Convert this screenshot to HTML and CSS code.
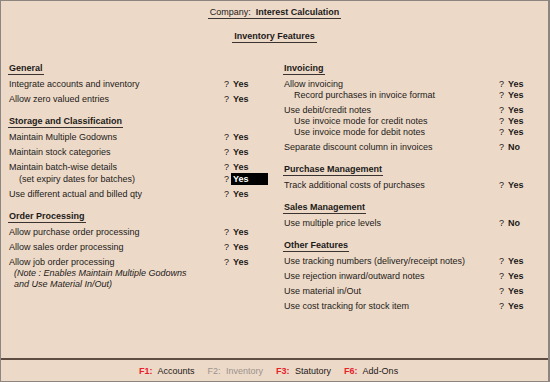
FILE: index.html
```html
<!DOCTYPE html>
<html lang="en">
<head>
    <meta charset="UTF-8">
    <title>Inventory Features</title>
    <link rel="stylesheet" href="styles.css">
</head>
<body>
    <div class="screen">
        <div class="main">
            <div class="title">
                <div class="line"><span class="uline">Company:&nbsp; <b>Interest Calculation</b></span></div>
                <div class="line second"><span class="uline"><b>Inventory Features</b></span></div>
            </div>
            <div class="cols">
                <div class="col left">
                    <div class="section first">
                        <div class="heading"><span>General</span></div>
                        <div class="row"><span class="label">Integrate accounts and inventory</span><span class="q">?</span><span class="val">Yes</span></div>
                        <div class="row"><span class="label">Allow zero valued entries</span><span class="q">?</span><span class="val">Yes</span></div>
                    </div>
                    <div class="section">
                        <div class="heading"><span>Storage and Classification</span></div>
                        <div class="row"><span class="label">Maintain Multiple Godowns</span><span class="q">?</span><span class="val">Yes</span></div>
                        <div class="row"><span class="label">Maintain stock categories</span><span class="q">?</span><span class="val">Yes</span></div>
                        <div class="row"><span class="label">Maintain batch-wise details</span><span class="q">?</span><span class="val">Yes</span></div>
                        <div class="sub wide"><span class="label">(set expiry dates for batches)</span><span class="q">?</span><span class="val active">Yes</span></div>
                        <div class="row"><span class="label">Use different actual and billed qty</span><span class="q">?</span><span class="val">Yes</span></div>
                    </div>
                    <div class="section">
                        <div class="heading"><span>Order Processing</span></div>
                        <div class="row"><span class="label">Allow purchase order processing</span><span class="q">?</span><span class="val">Yes</span></div>
                        <div class="row"><span class="label">Allow sales order processing</span><span class="q">?</span><span class="val">Yes</span></div>
                        <div class="row"><span class="label">Allow job order processing</span><span class="q">?</span><span class="val">Yes</span></div>
                        <div class="note">(Note : Enables Maintain Multiple Godowns<br>and Use Material In/Out)</div>
                    </div>
                </div>
                <div class="col right">
                    <div class="section first">
                        <div class="heading"><span>Invoicing</span></div>
                        <div class="row"><span class="label">Allow invoicing</span><span class="q">?</span><span class="val">Yes</span></div>
                        <div class="sub"><span class="label">Record purchases in invoice format</span><span class="q">?</span><span class="val">Yes</span></div>
                        <div class="row"><span class="label">Use debit/credit notes</span><span class="q">?</span><span class="val">Yes</span></div>
                        <div class="sub"><span class="label">Use invoice mode for credit notes</span><span class="q">?</span><span class="val">Yes</span></div>
                        <div class="sub"><span class="label">Use invoice mode for debit notes</span><span class="q">?</span><span class="val">Yes</span></div>
                        <div class="row"><span class="label">Separate discount column in invoices</span><span class="q">?</span><span class="val">No</span></div>
                    </div>
                    <div class="section">
                        <div class="heading"><span>Purchase Management</span></div>
                        <div class="row"><span class="label">Track additional costs of purchases</span><span class="q">?</span><span class="val">Yes</span></div>
                    </div>
                    <div class="section">
                        <div class="heading"><span>Sales Management</span></div>
                        <div class="row"><span class="label">Use multiple price levels</span><span class="q">?</span><span class="val">No</span></div>
                    </div>
                    <div class="section">
                        <div class="heading"><span>Other Features</span></div>
                        <div class="row"><span class="label">Use tracking numbers (delivery/receipt notes)</span><span class="q">?</span><span class="val">Yes</span></div>
                        <div class="row"><span class="label">Use rejection inward/outward notes</span><span class="q">?</span><span class="val">Yes</span></div>
                        <div class="row"><span class="label">Use material in/Out</span><span class="q">?</span><span class="val">Yes</span></div>
                        <div class="row"><span class="label">Use cost tracking for stock item</span><span class="q">?</span><span class="val">Yes</span></div>
                    </div>
                </div>
            </div>
        </div>
        <div class="footer">
            <span class="key"><b>F1:</b> Accounts</span>
            <span class="key off"><b>F2:</b> Inventory</span>
            <span class="key"><b>F3:</b> Statutory</span>
            <span class="key"><b>F6:</b> Add-Ons</span>
        </div>
    </div>
</body>
</html>
```

FILE: styles.css
```css
html, body {
    margin: 0;
    padding: 0;
}

body {
    font-family: "Liberation Sans", Arial, sans-serif;
    font-size: 9px;
    color: #1c1a18;
    background-color: #edd9c8;
}

.screen {
    height: 382px;
    box-sizing: border-box;
    border-top: 1px solid #8c8580;
    border-left: 1px solid #8c8580;
    border-right: 2px solid #8c8580;
    border-bottom: 1px solid #8c8580;
    display: flex;
    flex-direction: column;
}

.main {
    flex: 1;
}

.title {
    text-align: center;
    padding-top: 5px;
}

.line {
    line-height: 12px;
}

.line.second {
    margin-top: 11px;
}

.uline {
    display: inline-block;
    padding: 0 2px;
    border-bottom: 1px solid #3a3330;
}

.cols {
    display: flex;
    margin-top: 19px;
    padding-left: 7px;
}

.col.left {
    width: 275px;
}

.col.right {
    flex: 1;
}

.section {
    margin-top: 10px;
}

.section.first {
    margin-top: 0;
}

.heading {
    line-height: 12px;
    font-weight: bold;
}

.heading span {
    display: inline-block;
    padding: 0 1px;
    border-bottom: 1px solid #3a3330;
}

.row, .sub {
    display: flex;
    line-height: 12px;
}

.row {
    margin-top: 3px;
}

.sub {
    line-height: 11px;
}

.sub.wide {
    line-height: 12px;
}

.label {
    width: 216px;
    padding-left: 1px;
    box-sizing: border-box;
}

.sub .label {
    padding-left: 11px;
}

.q {
    width: 9px;
}

.val {
    font-weight: bold;
}

.val.active {
    background-color: #000;
    color: #fff;
    width: 35px;
    padding-left: 2px;
    margin-left: -2px;
}

.note {
    font-style: italic;
    line-height: 11px;
    padding-left: 6px;
}

.footer {
    height: 21px;
    border-top: 2px solid #5e4c42;
    display: flex;
    align-items: center;
    padding-left: 138px;
    gap: 13px;
}

.key b {
    color: #e8212a;
    margin-right: 3px;
}

.key.off {
    color: #9a938e;
}

.key.off b {
    color: #9a938e;
    font-weight: normal;
}
```
